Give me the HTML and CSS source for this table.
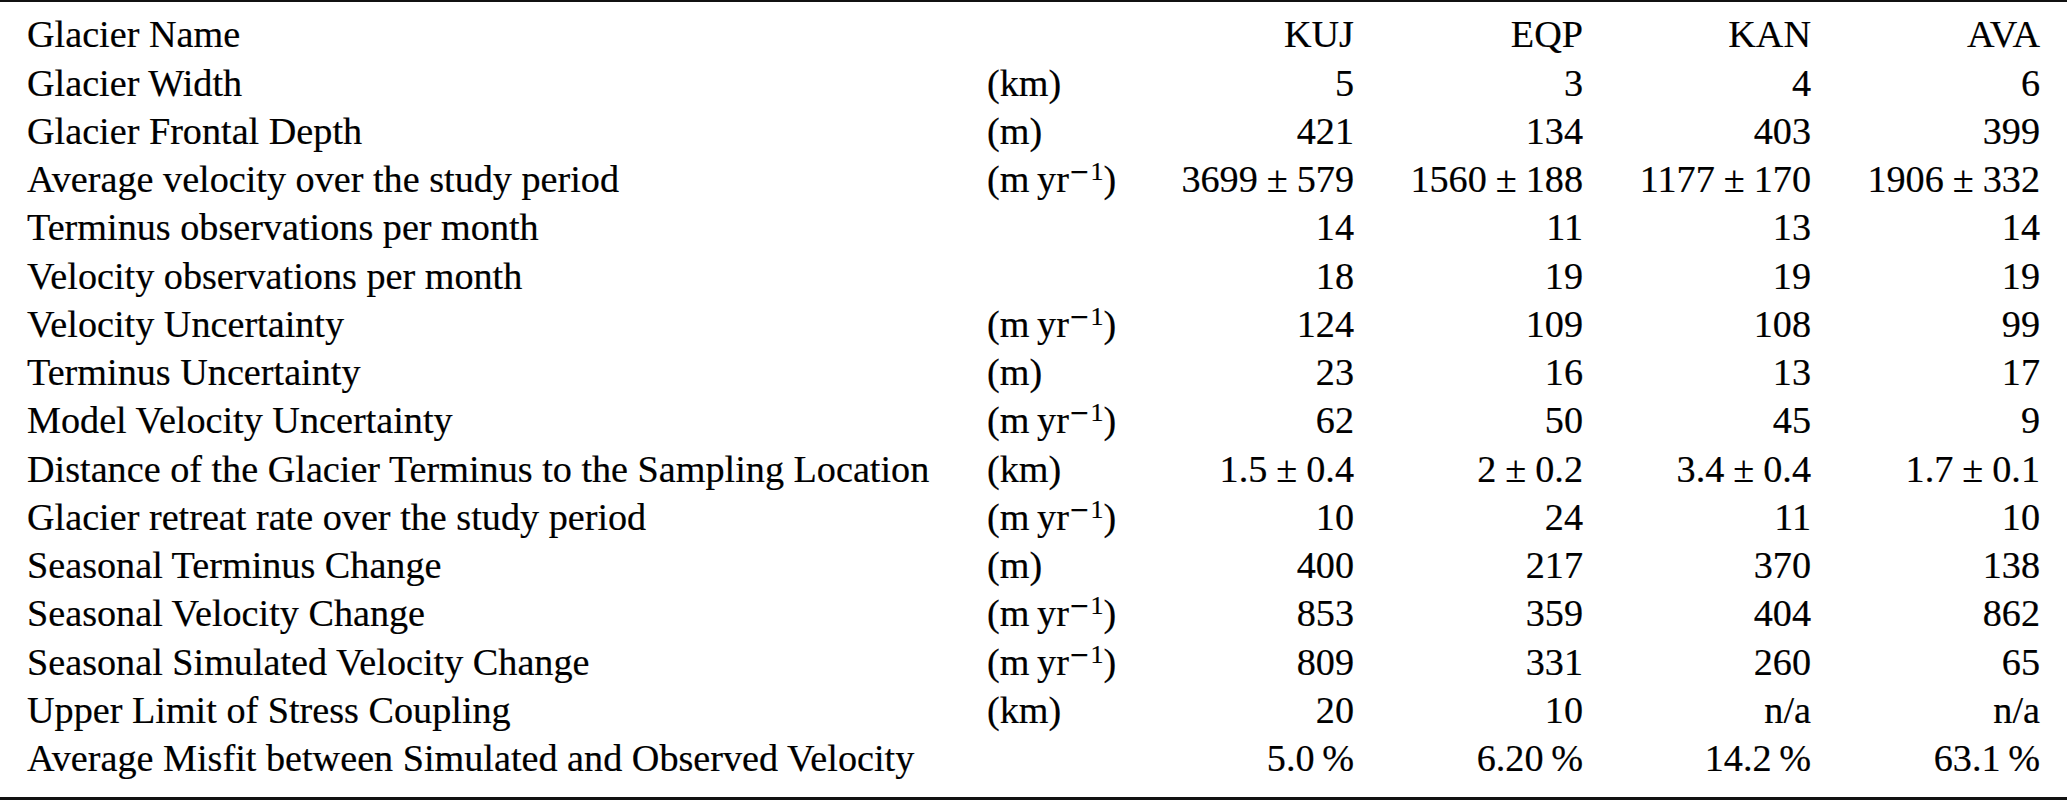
FILE: index.html
```html
<!DOCTYPE html>
<html lang="en">
<head>
<meta charset="utf-8">
<title>Glacier table</title>
<link rel="stylesheet" href="styles.css">
</head>
<body>
<div class="table-frame">
<div class="glacier-table" role="table">
<div class="row" role="row"><span class="label">Glacier Name</span><span class="unit"></span><span class="num">KUJ</span><span class="num">EQP</span><span class="num">KAN</span><span class="num">AVA</span></div>
<div class="row" role="row"><span class="label">Glacier Width</span><span class="unit">(km)</span><span class="num">5</span><span class="num">3</span><span class="num">4</span><span class="num">6</span></div>
<div class="row" role="row"><span class="label">Glacier Frontal Depth</span><span class="unit">(m)</span><span class="num">421</span><span class="num">134</span><span class="num">403</span><span class="num">399</span></div>
<div class="row" role="row"><span class="label">Average velocity over the study period</span><span class="unit">(m&#8201;yr<sup class="exp"><span class="minus">&minus;</span>1</sup>)</span><span class="num">3699<span class="pm">±</span>579</span><span class="num">1560<span class="pm">±</span>188</span><span class="num">1177<span class="pm">±</span>170</span><span class="num">1906<span class="pm">±</span>332</span></div>
<div class="row" role="row"><span class="label">Terminus observations per month</span><span class="unit"></span><span class="num">14</span><span class="num">11</span><span class="num">13</span><span class="num">14</span></div>
<div class="row" role="row"><span class="label">Velocity observations per month</span><span class="unit"></span><span class="num">18</span><span class="num">19</span><span class="num">19</span><span class="num">19</span></div>
<div class="row" role="row"><span class="label">Velocity Uncertainty</span><span class="unit">(m&#8201;yr<sup class="exp"><span class="minus">&minus;</span>1</sup>)</span><span class="num">124</span><span class="num">109</span><span class="num">108</span><span class="num">99</span></div>
<div class="row" role="row"><span class="label">Terminus Uncertainty</span><span class="unit">(m)</span><span class="num">23</span><span class="num">16</span><span class="num">13</span><span class="num">17</span></div>
<div class="row" role="row"><span class="label">Model Velocity Uncertainty</span><span class="unit">(m&#8201;yr<sup class="exp"><span class="minus">&minus;</span>1</sup>)</span><span class="num">62</span><span class="num">50</span><span class="num">45</span><span class="num">9</span></div>
<div class="row" role="row"><span class="label">Distance of the Glacier Terminus to the Sampling Location</span><span class="unit">(km)</span><span class="num">1.5<span class="pm">±</span>0.4</span><span class="num">2<span class="pm">±</span>0.2</span><span class="num">3.4<span class="pm">±</span>0.4</span><span class="num">1.7<span class="pm">±</span>0.1</span></div>
<div class="row" role="row"><span class="label">Glacier retreat rate over the study period</span><span class="unit">(m&#8201;yr<sup class="exp"><span class="minus">&minus;</span>1</sup>)</span><span class="num">10</span><span class="num">24</span><span class="num">11</span><span class="num">10</span></div>
<div class="row" role="row"><span class="label">Seasonal Terminus Change</span><span class="unit">(m)</span><span class="num">400</span><span class="num">217</span><span class="num">370</span><span class="num">138</span></div>
<div class="row" role="row"><span class="label">Seasonal Velocity Change</span><span class="unit">(m&#8201;yr<sup class="exp"><span class="minus">&minus;</span>1</sup>)</span><span class="num">853</span><span class="num">359</span><span class="num">404</span><span class="num">862</span></div>
<div class="row" role="row"><span class="label">Seasonal Simulated Velocity Change</span><span class="unit">(m&#8201;yr<sup class="exp"><span class="minus">&minus;</span>1</sup>)</span><span class="num">809</span><span class="num">331</span><span class="num">260</span><span class="num">65</span></div>
<div class="row" role="row"><span class="label">Upper Limit of Stress Coupling</span><span class="unit">(km)</span><span class="num">20</span><span class="num">10</span><span class="num">n/a</span><span class="num">n/a</span></div>
<div class="row" role="row"><span class="label">Average Misfit between Simulated and Observed Velocity</span><span class="unit"></span><span class="num">5.0&#8201;%</span><span class="num">6.20&#8201;%</span><span class="num">14.2&#8201;%</span><span class="num">63.1&#8201;%</span></div>
</div>
</div>
</body>
</html>
```
FILE: styles.css
```css
html, body {
  margin: 0;
  padding: 0;
  background: #ffffff;
}

.table-frame {
  width: 2067px;
  box-sizing: border-box;
  border-top: 2px solid #111111;
  border-bottom: 3px solid #111111;
  padding: 8.3px 27px 14px 27px;
}

.glacier-table {
  display: grid;
  grid-auto-rows: 48.28px;
  font-family: "Liberation Serif", "Times New Roman", serif;
  font-size: 38.2px;
  color: #000000;
  -webkit-text-stroke: 0.2px #000000;
}

.row {
  display: grid;
  grid-template-columns: 960px 140px 227px 229px 228px 229px;
  line-height: 48.28px;
  white-space: nowrap;
}

.label,
.unit {
  text-align: left;
}

.num {
  text-align: right;
}

.pm {
  margin: 0 9px;
}

.exp {
  font-size: 0.68em;
  line-height: 0;
  vertical-align: 12px;
}

.minus {
  font-family: "DejaVu Serif", serif;
  font-size: 0.95em;
  margin-right: 1px;
}
```
